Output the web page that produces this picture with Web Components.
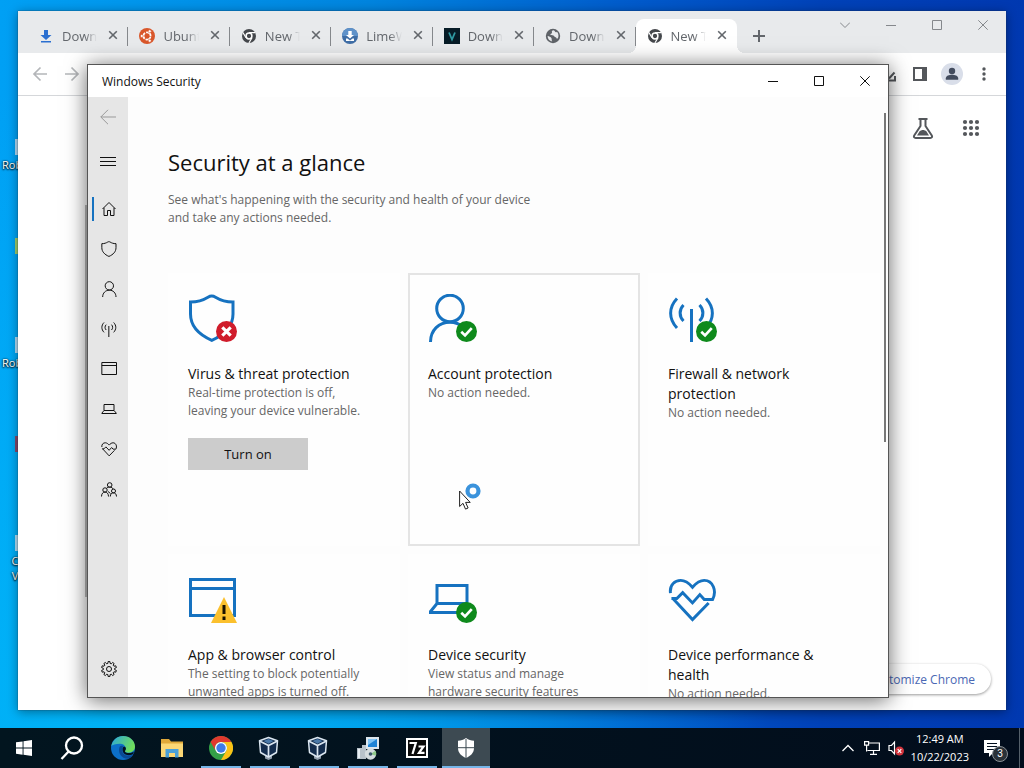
<!DOCTYPE html>
<html lang="en">
<head>
<meta charset="utf-8">
<meta name="viewport" content="width=device-width, initial-scale=1">
<title>Desktop</title>
<style>
  html, body { height: 100%; margin: 0; }
  body { font-family: "Open Sans", "Noto Sans", sans-serif; font-size: 13px; overflow: hidden; }
</style>
</head>
<body>
<desk-top>
  <desktop-shortcut slot="shortcut" color="#dfe9f2">Roblox</desktop-shortcut>
  <desktop-shortcut slot="shortcut" color="#c8d94a"></desktop-shortcut>
  <desktop-shortcut slot="shortcut" color="#dfe9f2">Roblox</desktop-shortcut>
  <desktop-shortcut slot="shortcut" color="#a8324a"></desktop-shortcut>
  <desktop-shortcut slot="shortcut" color="#dfe9f2">C<br>V</desktop-shortcut>

  <browser-window slot="window">
    <browser-tab slot="tab" icon="download">Downloads</browser-tab>
    <browser-tab slot="tab" icon="ubuntu">Ubuntu</browser-tab>
    <browser-tab slot="tab" icon="chromeGray">New Tab</browser-tab>
    <browser-tab slot="tab" icon="lime">LimeWire</browser-tab>
    <browser-tab slot="tab" icon="vegas">Download</browser-tab>
    <browser-tab slot="tab" icon="globe">Download</browser-tab>
    <browser-tab slot="tab" icon="chromeGray" active>New Tab</browser-tab>
  </browser-window>

  <security-window slot="window">
    <status-card slot="card" icon="shield" badge="badgeError" heading="Virus &amp; threat protection" action="Turn on">Real-time protection is off, leaving your device vulnerable.</status-card>
    <status-card slot="card" icon="account" badge="badgeOk" heading="Account protection" hovered>No action needed.</status-card>
    <status-card slot="card" icon="antenna" badge="badgeOk" heading="Firewall &amp; network protection">No action needed.</status-card>
    <status-card slot="card" icon="window" badge="badgeWarn" heading="App &amp; browser control">The setting to block potentially unwanted apps is turned off.</status-card>
    <status-card slot="card" icon="laptop" badge="badgeOk" heading="Device security">View status and manage hardware security features</status-card>
    <status-card slot="card" icon="heart" heading="Device performance &amp; health">No action needed.</status-card>
  </security-window>

  <task-bar slot="taskbar">
    <task-button slot="pinned" icon="start" size="16" label="Start"></task-button>
    <task-button slot="pinned" icon="search" size="24" label="Search"></task-button>
    <task-button slot="app" icon="edge" size="24" label="Microsoft Edge"></task-button>
    <task-button slot="app" icon="folder" size="24" label="File Explorer"></task-button>
    <task-button slot="app" icon="chrome" size="24" label="Google Chrome" running></task-button>
    <task-button slot="app" icon="vbox" size="24" label="VirtualBox" running></task-button>
    <task-button slot="app" icon="vbox" size="24" label="VirtualBox machine" running></task-button>
    <task-button slot="app" icon="installer" size="24" label="Installer" running></task-button>
    <task-button slot="app" icon="seven" size="22" label="7-Zip" running></task-button>
    <task-button slot="app" icon="defender" size="20" label="Windows Security" running active></task-button>
  </task-bar>
</desk-top>

<script>
// Outline of a cog wheel, centred in a 48px box
function gearPath(teeth, outer, inner) {
  const pts = [];
  const step = (Math.PI * 2) / teeth;
  for (let i = 0; i < teeth; i++) {
    const a = i * step - Math.PI / 2;
    [[-0.32, inner], [-0.2, outer], [0.2, outer], [0.32, inner]].forEach(([t, r]) => {
      pts.push((24 + Math.cos(a + t * step) * r).toFixed(1) + ' ' + (24 + Math.sin(a + t * step) * r).toFixed(1));
    });
  }
  return 'M' + pts.join('L') + 'z';
}

const line = (w) => `fill="none" stroke="currentColor" stroke-width="${w}"`;

// name: [viewBox, markup]
const ICONS = {
  // security
  shield: ['0 0 48 48', `<path ${line(3)} d="M2.5 8c8 0 13-2 17.5-4.8 2.5-1.5 5-1.5 7.5 0C32 6 37 8 45 8v12c0 12-8 20.5-21.200 26.300C10.500 40.500 2.500 32 2.500 20z"/>`],
  account: ['0 0 48 48', `<g ${line(3)}><circle cx="22" cy="14.5" r="13.3"/><path d="M2.5 48c0-12 8.5-19.8 19.5-19.8 5.500 0 10 2 14 5"/></g>`],
  person: ['0 0 48 48', `<g ${line(3)}><circle cx="25" cy="14.5" r="12.5"/><path d="M5 48c0-12 8.500-20.500 20-20.500S45 36 45 48"/></g>`],
  antenna: ['0 0 48 48', `<g ${line(3)}><path d="M23.500 15v33M9 4.500c-8.500 9-8.500 20.500 0 29.500M15.500 11c-4.500 4.500-4.500 11.500 0 16M38 4.500c8.500 9 8.500 20.500 0 29.500M31.500 11c4.500 4.500 4.500 11.500 0 16"/></g>`],
  window: ['0 0 48 48', `<g ${line(3)}><path d="M2.500 4.500h44v36h-44zM2.500 13.500h44"/></g>`],
  laptop: ['0 0 48 48', `<g ${line(3)}><path d="M9 10.500h30v18H9zM9 28.500 2.500 36.500v1H46v-1l-7-8"/></g>`],
  heart: ['0 0 49 49', `<g ${line(3)}><path d="M2.500 18.500C1.500 10 7 5.500 13 5.500c5 0 8.500 3 12 7 3.500-4 7-7 12-7 9 0 13 11 8.500 19.500H37l-4.500-5L25 28.500 15 18l-6 6H3.500M5 24l20 21.500L41.500 28.500"/></g>`],
  badgeOk: ['0 0 20 20', `<circle cx="10" cy="10" r="10" fill="#0f8a1c"/><path d="M5 10.300 8.600 13.700 15 6.800" fill="none" stroke="#fff" stroke-width="2.600"/>`],
  badgeError: ['0 0 20 20', `<circle cx="10" cy="10" r="10" fill="#d01c2b"/><path d="M6 6l8 8M14 6l-8 8" stroke="#fff" stroke-width="3"/>`],
  badgeWarn: ['0 0 26 26', `<path d="M13 0 26 26H0z" fill="#fbc02d"/><path d="M13 8v9M13 19.500v3.500" stroke="#1a1200" stroke-width="3"/>`],
  back: ['0 0 16 16', `<path ${line(1)} d="M16 8H.8M8 .8.8 8 8 15.200"/>`],
  menu: ['0 0 16 16', `<path ${line(1)} d="M0 4.500h16M0 8.500h16M0 12.500h16"/>`],
  home: ['0 0 16 16', `<path ${line(1)} d="M1.500 8 8 1.500 14.500 8M3 6.800v7.700h3.500V9.500h3v5H13V6.800"/>`],
  family: ['0 0 16 16', `<g ${line(1)}><circle cx="8.700" cy="4" r="2.300"/><circle cx="4" cy="9" r="2.200"/><circle cx="12.500" cy="10" r="2"/><path d="M.5 15.500c0-6 7-6 7 0M9.300 15.500c0-5 6.200-5 6.200 0M5.500 7.500c.5-1 1.700-1.500 3-1.500 2 0 3.300 1 3.600 2.200M7 10.500l2.500 2"/></g>`],
  gear: ['0 0 48 48', `<g ${line(3)} stroke-linejoin="round"><path d="${gearPath(10, 22.5, 17)}"/><circle cx="24" cy="24" r="7.500"/></g>`],

  // caption buttons
  chevron: ['0 0 10 10', `<path ${line(1)} d="M0 2.500l5 5 5-5"/>`],
  minimize: ['0 0 10 10', `<path ${line(1)} d="M0 5.500h10"/>`],
  maximize: ['0 0 10 10', `<path ${line(1)} d="M.5.5h9v9h-9z"/>`],
  close: ['0 0 10 10', `<path ${line(1)} d="M.3.3l9.400 9.400M9.700.3.3 9.700"/>`],

  // browser
  tabClose: ['0 0 16 16', `<path ${line(1.6)} d="M4.200 5.200l7.600 7.600M11.800 5.200l-7.600 7.600"/>`],
  plus: ['0 0 16 16', `<path ${line(2)} d="M8 2v12M2 8h12"/>`],
  arrowLeft: ['0 0 16 16', `<path ${line(1.7)} d="M15 8H2M8.500 1.500 2 8l6.500 6.500"/>`],
  arrowRight: ['0 0 16 16', `<path ${line(1.7)} d="M1 8h13M7.500 1.500 14 8l-6.500 6.500"/>`],
  share: ['0 0 16 16', `<path ${line(2)} d="M2 6v8.500h13V10M14.500 6.500 9 12.500"/>`],
  panel: ['0 0 16 16', `<path fill="currentColor" fill-rule="evenodd" d="M1 1h14v14H1zM3 3v10h7V3z"/>`],
  avatar: ['0 0 22 22', `<circle cx="11" cy="11" r="11" fill="#d9dee9"/><g fill="#434c5e"><circle cx="11" cy="8" r="3.200"/><path d="M4.800 16.800v-1.500c0-2.500 3.500-3.500 6.200-3.500s6.200 1 6.200 3.500v1.500z"/></g>`],
  dots: ['0 0 16 16', `<g fill="currentColor"><circle cx="8" cy="3" r="1.700"/><circle cx="8" cy="8" r="1.700"/><circle cx="8" cy="13" r="1.700"/></g>`],
  flask: ['0 0 24 24', `<path ${line(2)} stroke-linejoin="round" d="M7.500 3h9M9.500 3v7L3.200 19.500c-.8 1.500 0 2.500 1.500 2.500h14.600c1.500 0 2.300-1 1.500-2.500L14.500 10V3"/><path fill="currentColor" d="M6 19.500l2.500-4c2-2 5-2 7 0l2.500 4z"/>`],
  apps: ['0 0 24 24', `<g fill="currentColor">${[6, 12, 18].map((y) => [6, 12, 18].map((x) => `<circle cx="${x}" cy="${y}" r="2.100"/>`).join('')).join('')}</g>`],
  download: ['0 0 16 16', `<path fill="#2a6fd0" d="M6 2h4v5h3.500L8 12 2.500 7H6zM3 13h10v1.600H3z"/>`],
  ubuntu: ['0 0 16 16', `<circle cx="8" cy="8" r="8" fill="#d9572b"/><circle cx="8" cy="8" r="3.600" fill="none" stroke="#fff" stroke-width="1.700" stroke-dasharray="6.500 1.040" transform="rotate(8 8 8)"/><g fill="#fff" stroke="#d9572b" stroke-width=".6"><circle cx="2.800" cy="8" r="1.500"/><circle cx="10.700" cy="3.300" r="1.500"/><circle cx="10.700" cy="12.700" r="1.500"/></g>`],
  chromeGray: ['0 0 16 16', `<circle cx="8" cy="8" r="7" fill="#45484c"/><circle cx="8" cy="8" r="2.900" fill="#45484c" stroke="#fff" stroke-width="1.500"/><path d="M8 4.600h6.200M5 9.700 1.900 4.500M11 9.700 7.900 15" stroke="#fff" stroke-width="1.200"/>`],
  lime: ['0 0 16 16', `<circle cx="8" cy="8" r="8" fill="#3f6ea6"/><path d="M8 0a8 8 0 0 1 8 8H0a8 8 0 0 1 8-8z" fill="#5f92c9"/><path fill="#fff" d="M6.300 3h3.400v4h2.300L8 10.500 4 7h2.300zM4 10.500h1.500L8 12.500l2.500-2H12v2.500H4z"/>`],
  vegas: ['0 0 16 16', `<path fill="#071c27" d="M0 0h16v16H0z"/><path fill="none" stroke="#2f9aa3" stroke-width="1.800" d="M5 4.500l3 7 3-7"/>`],
  globe: ['0 0 16 16', `<circle cx="8" cy="8" r="7.200" fill="#5f6368"/><path fill="#e8eaec" d="M8.500 2.200c-1.500 0-2 1-1.500 2.300.4 1.200-1.500 1-1.800 2.200 1.500.6 3.300.3 4 1.500.8 1.200 2.500.8 2.300 2.200l1.300.2c1.200-2.500.8-5-.8-6.800-.8.800-1.800.6-2-.2-.2-.7-.8-1.200-1.500-1.400zM2.600 8c1.600.3 3 .8 3.800 2 .5.800 0 2 .8 3.400C4.500 13 2.600 11 2.600 8z"/>`],

  // task bar
  start: ['0 0 16 16', `<path fill="#fff" d="M0 2.300 6.600 1.400v6.200H0zM7.500 1.300 16 0v7.600H7.500zM0 8.500h6.600v6.200L0 13.800zM7.500 8.500H16V16l-8.500-1.200z"/>`],
  search: ['0 0 24 24', `<g fill="none" stroke="#fff" stroke-width="2.300"><circle cx="14" cy="9.500" r="8"/><path d="M8.600 15.500 1.500 23"/></g>`],
  edge: ['0 0 24 24', `<defs><linearGradient id="e1" x1="0" y1="0" x2="1" y2=".4"><stop offset="0" stop-color="#2aa6dd"/><stop offset="1" stop-color="#6fdc5c"/></linearGradient></defs><circle cx="12" cy="12" r="12" fill="#0c6fc8"/><path fill="url(#e1)" d="M.3 10C1.500 4 6.300 0 12 0c7 0 12 5 12 10.500 0 4-3 6.200-6.500 6.200-2.500 0-4-1-3.500-2 2-2.500 0-6.700-4.500-7C5 7.500 1.500 9 .3 10z"/><path fill="#0a4a94" d="M8.500 11c-2 6 2 12 9 11.700 2-.8 3.500-2 4.800-4-7 3-12.500-1-11-6.700.2-1 .6-1.500 1-2-1.500-.5-3.200 0-3.800 1z"/><path fill="#03121f" d="M11.600 12.500c.2-1.500 1.600-2.200 2.800-1.200 1 1.200.4 2.600-.4 3.600-.5 1.200 1.500 2.400 4.500 2.200 2-.2 3.500-.8 4.300-1.600l-.6 2.400c-5 3-11.500.5-10.600-5.400z"/>`],
  folder: ['0 0 24 24', `<path fill="#e0a93a" d="M1 3h8l2 2.500h12V20H1z"/><path fill="#fbd775" d="M1 7.500h22V21H1z"/><path fill="#4aa0d8" d="M5.500 13h13v8.500h-3.500V17H9v4.500H5.500z"/>`],
  chrome: ['0 0 24 24', `<circle cx="12" cy="12" r="12" fill="#34a047"/><path fill="#e0392e" d="M1.600 6A12 12 0 0 1 22.400 6H12a6 6 0 0 0-5.200 9z"/><path fill="#fbc116" d="M22.400 6A12 12 0 0 1 12 24l5.200-9A6 6 0 0 0 12 6z"/><circle cx="12" cy="12" r="6" fill="#fff"/><circle cx="12" cy="12" r="4.700" fill="#3f7be8"/>`],
  vbox: ['0 0 24 24', `<path fill="#8f9cab" d="M7 18h7v4.500L10.500 24 7 22.500z"/><path fill="#132c4c" stroke="#dbe6f0" stroke-width="1.500" stroke-linejoin="round" d="M10.500 1.500l9 3.300-1 11.700-8 4.500-8-4.500-1-11.700z"/><path fill="none" stroke="#dbe6f0" stroke-width="1.700" d="M1.500 5 10.500 9.500l9-4.500M10.500 9.500V21"/><path fill="#4a78a8" d="M10.500 3l5 2-5 2.700-5-2.700z"/>`],
  installer: ['0 0 24 24', `<path fill="#b8c2ca" d="M1 12h5v11H1zM6 9h4v14H6z"/><path fill="#e8eef2" d="M2 13h2v9H2z"/><path fill="#dce6ee" d="M10 1h13v12H10z"/><path fill="#1f83d6" d="M12 3h9v8h-9z"/><path fill="#7fc3f5" d="M12 3h9l-9 6z"/><circle cx="14.500" cy="18" r="5.700" fill="#d5dcdf"/><path fill="#8fc98a" d="M14.500 18l5-3.300a6 6 0 0 1 .5 5z"/><circle cx="14.500" cy="18" r="1.800" fill="#3c566a"/>`],
  seven: ['0 0 22 22', `<path fill="#fff" d="M0 1h22v20H0z"/><path fill="#0a0a0a" d="M2 3h18v16H2z"/><path fill="none" stroke="#fff" stroke-width="2.200" d="M3.500 6h6.300L6.500 17M12.500 9.500h5l-4.500 6.300h5.500"/>`],
  defender: ['0 0 20 20', `<path fill="#fff" d="M10 0c2.500 2 5 2.600 8 2.700V10c0 5-3.500 8-8 10-4.500-2-8-5-8-10V2.700C5 2.600 7.500 2 10 0z"/><path d="M10 1v19M2 9.700h16" stroke="#3d4a52" stroke-width="1"/>`],
  trayUp: ['0 0 16 16', `<path fill="none" stroke="#fff" stroke-width="1.300" d="M2.500 11 8 5.500l5.500 5.500"/>`],
  network: ['0 0 16 16', `<path fill="none" stroke="#fff" stroke-width="1.200" d="M4.500 3H15.400v7.500H3.500M.6 1.600h4v3.500h-4zM2.600 5.100v6.400M9.500 10.500V14M6 14.300h7"/>`],
  sound: ['0 0 16 16', `<path fill="none" stroke="#fff" stroke-width="1.200" d="M6.500 2v12L3.500 10.500H1v-5h2.500z"/><circle cx="11.500" cy="11" r="4.500" fill="#d1343c"/><path d="M9.700 9.200l3.600 3.600M13.300 9.200 9.700 12.800" stroke="#fff" stroke-width="1.200"/>`],
  notes: ['0 0 18 18', `<path fill="#fff" d="M1 1h16v13h-7l-4 4v-4H1z"/><path d="M4 4.500h10M4 7.500h10M4 10.500h7" stroke="#03101f" stroke-width="1.200"/>`],

  // pointer
  arrow: ['0 0 12 20', `<path fill="#fff" stroke="#222" stroke-linejoin="round" d="M.6 1v15.500L4 13.300l2.500 5.800 2.600-1.100-2.500-5.600h4.600z"/>`],
  busy: ['0 0 16 16', `<circle cx="8" cy="8" r="5.500" fill="#fff" stroke="#3b93dc" stroke-width="4.200"/>`]
};

class UiIcon extends HTMLElement {
  constructor() {
    super();
    this.attachShadow({ mode: 'open' });
  }

  connectedCallback() {
    const [box, markup] = ICONS[this.getAttribute('name')];
    const size = this.getAttribute('size') || 16;
    this.shadowRoot.innerHTML = `
      <style>
        :host { display: inline-flex; flex: none; }
        svg { display: block; height: ${size}px; }
      </style>
      <svg viewBox="${box}" aria-hidden="true">${markup}</svg>
    `;
  }
}
customElements.define('ui-icon', UiIcon);

// Minimize / maximize / close strip of a window
class CaptionButtons extends HTMLElement {
  constructor() {
    super();
    this.attachShadow({ mode: 'open' });
  }

  connectedCallback() {
    const names = ['minimize', 'maximize', 'close'];
    if (this.hasAttribute('chevron')) names.unshift('chevron');
    this.shadowRoot.innerHTML = `
      <style>
        :host { display: flex; }
        button {
          display: flex; align-items: center; justify-content: center;
          width: 46px; height: 28px; padding: 0; border: 0;
          background: none; color: inherit;
        }
        button:hover { background: rgba(0, 0, 0, .1); }
      </style>
      ${names.map((n) => `<button aria-label="${n}"><ui-icon name="${n}" size="10"></ui-icon></button>`).join('')}
    `;
  }
}
customElements.define('caption-buttons', CaptionButtons);

class DesktopShortcut extends HTMLElement {
  constructor() {
    super();
    this.attachShadow({ mode: 'open' });
  }

  connectedCallback() {
    this.shadowRoot.innerHTML = `
      <style>
        :host {
          display: flex; flex-direction: column; height: 99px;
          color: #fff; font-size: 11px; line-height: 15px;
          text-shadow: 0 1px 2px #000, 0 0 2px #000;
        }
        i { width: 32px; height: 16px; margin: 0 0 2px 15px; background: ${this.getAttribute('color')}; opacity: .8; }
        span { width: 26px; margin-left: 2px; text-align: center; white-space: nowrap; }
      </style>
      <i></i><span><slot></slot></span>
    `;
  }
}
customElements.define('desktop-shortcut', DesktopShortcut);

class BrowserTab extends HTMLElement {
  constructor() {
    super();
    this.attachShadow({ mode: 'open' });
  }

  connectedCallback() {
    this.shadowRoot.innerHTML = `
      <style>
        :host {
          position: relative; display: flex; flex: 1; align-items: center; gap: 8px;
          min-width: 0; height: 34px; padding: 0 7px 0 11px; box-sizing: border-box;
          background: linear-gradient(#85888c, #85888c) right center / 1px 19px no-repeat;
          color: #63676c;
        }
        :host([active]) { background: #fff; border-radius: 8px 8px 0 0; }
        :host([active])::before, :host([active])::after {
          content: ""; position: absolute; bottom: 0; width: 8px; height: 8px;
        }
        :host([active])::before { left: -8px; background: radial-gradient(circle at 0 0, transparent 8px, #fff 8px); }
        :host([active])::after { right: -8px; background: radial-gradient(circle at 100% 0, transparent 8px, #fff 8px); }
        button { padding: 0; border: 0; background: none; color: inherit; font: inherit; }
        .tab { display: flex; flex: 1; align-items: center; gap: 8px; min-width: 0; font-size: 13px; }
        .tab span {
          flex: 1; overflow: hidden; white-space: nowrap; text-align: left;
          -webkit-mask-image: linear-gradient(to right, #000 65%, transparent 100%);
          mask-image: linear-gradient(to right, #000 65%, transparent 100%);
        }
      </style>
      <button class="tab" role="tab"><ui-icon name="${this.getAttribute('icon')}"></ui-icon><span><slot></slot></span></button>
      <button aria-label="Close tab"><ui-icon name="tabClose"></ui-icon></button>
    `;
  }
}
customElements.define('browser-tab', BrowserTab);

class BrowserWindow extends HTMLElement {
  constructor() {
    super();
    this.attachShadow({ mode: 'open' });
  }

  connectedCallback() {
    this.shadowRoot.innerHTML = `
      <style>
        :host {
          position: absolute; inset: 11px 18px 18px 18px;
          display: flex; flex-direction: column; background: #fff;
          box-shadow: 0 0 1px #234, 0 2px 10px rgba(0, 0, 0, .4);
        }
        .strip { display: flex; align-items: flex-end; height: 42px; padding-left: 9px; background: #e8eaec; color: #63676c; }
        .tabs { display: flex; flex: 0 1 710px; min-width: 0; }
        .new { margin-left: 8px; }
        caption-buttons { align-self: flex-start; margin-left: auto; color: #85888c; }
        button {
          display: flex; align-items: center; justify-content: center;
          width: 32px; height: 34px; padding: 0; border: 0;
          background: none; color: inherit; font: inherit;
        }
        .new { width: 28px; }
        .toolbar { display: flex; align-items: center; height: 42px; padding: 0 6px; border-bottom: 1px solid #d5d7da; color: #54575b; }
        .nav { display: flex; margin-right: auto; color: #b4b6b9; }
        .page { display: flex; flex: 1; flex-direction: column; align-items: flex-end; justify-content: space-between; padding: 12px 15px 16px; color: #54575b; }
        .links { display: flex; gap: 8px; }
        .links button { width: 40px; height: 40px; }
        .customize {
          width: auto; height: 30px; padding: 0 16px; border-radius: 15px;
          background: #fff; color: #4a68b4; font-size: 12px;
          box-shadow: 0 1px 3px rgba(0, 0, 0, .4);
        }
      </style>
      <div class="strip">
        <div class="tabs" role="tablist"><slot name="tab"></slot></div>
        <button class="new" aria-label="New tab"><ui-icon name="plus"></ui-icon></button>
        <caption-buttons chevron></caption-buttons>
      </div>
      <div class="toolbar">
        <div class="nav">
          <button aria-label="Back"><ui-icon name="arrowLeft"></ui-icon></button>
          <button aria-label="Forward"><ui-icon name="arrowRight"></ui-icon></button>
        </div>
        <button aria-label="Share"><ui-icon name="share"></ui-icon></button>
        <button aria-label="Side panel"><ui-icon name="panel"></ui-icon></button>
        <button aria-label="Profile"><ui-icon name="avatar" size="22"></ui-icon></button>
        <button aria-label="Menu"><ui-icon name="dots"></ui-icon></button>
      </div>
      <div class="page">
        <div class="links">
          <button aria-label="Search labs"><ui-icon name="flask" size="24"></ui-icon></button>
          <button aria-label="Google apps"><ui-icon name="apps" size="24"></ui-icon></button>
        </div>
        <button class="customize">Customize Chrome</button>
      </div>
    `;
  }
}
customElements.define('browser-window', BrowserWindow);

class StatusCard extends HTMLElement {
  constructor() {
    super();
    this.attachShadow({ mode: 'open' });
  }

  connectedCallback() {
    const badge = this.getAttribute('badge');
    const action = this.getAttribute('action');
    this.shadowRoot.innerHTML = `
      <style>
        :host { display: block; padding: 19px 26px 19px 18px; border: 2px solid transparent; background: #fefefe; }
        :host([hovered]) { border-color: #e4e4e4; }
        .icon { position: relative; width: 50px; height: 48px; margin-bottom: 22px; color: #1672c0; }
        .badge { position: absolute; right: 1px; bottom: 0; }
        h2 { margin: 0; color: #111; font-size: 14px; font-weight: 400; line-height: 20px; }
        a { color: inherit; text-decoration: none; }
        p { margin: 0; color: #666; font-size: 12px; line-height: 18px; }
        button { width: 120px; height: 32px; margin-top: 18px; padding: 0; border: 0; background: #ccc; color: #111; font: inherit; }
      </style>
      <div class="icon">
        <ui-icon name="${this.getAttribute('icon')}" size="48"></ui-icon>
        ${badge ? `<ui-icon class="badge" name="${badge}" size="${badge === 'badgeWarn' ? 26 : 21}"></ui-icon>` : ''}
      </div>
      <h2><a href="#"></a></h2>
      <p><slot></slot></p>
      ${action ? `<button>${action}</button>` : ''}
    `;
    this.shadowRoot.querySelector('a').textContent = this.getAttribute('heading');
  }
}
customElements.define('status-card', StatusCard);

class SecurityWindow extends HTMLElement {
  constructor() {
    super();
    this.attachShadow({ mode: 'open' });
  }

  connectedCallback() {
    const pages = ['home', 'shield', 'person', 'antenna', 'window', 'laptop', 'heart', 'family'];
    this.shadowRoot.innerHTML = `
      <style>
        :host {
          position: absolute; inset: 64px 135px 30px 87px;
          display: flex; flex-direction: column; border: 1px solid #555; background: #fdfdfd;
          box-shadow: 0 2px 20px rgba(0, 0, 0, .6);
        }
        :host::before {
          content: ""; position: absolute; left: -3px; top: 140px; bottom: 100px; width: 2px; background: #888;
        }
        header { display: flex; align-items: center; height: 32px; padding-left: 14px; background: #fff; color: #111; font-size: 12px; }
        caption-buttons { margin-left: auto; }
        .body { display: flex; flex: 1; min-height: 0; }
        nav { display: flex; flex-direction: column; width: 40px; padding-bottom: 8px; box-sizing: border-box; background: #e6e6e6; color: #111; }
        nav button {
          display: flex; align-items: center; justify-content: center; box-sizing: border-box;
          width: 40px; height: 40px; padding: 0 0 0 2px; border: 0; background: none; color: inherit;
        }
        nav .back, nav .menu { padding: 0; }
        nav .back { color: #999; }
        nav .menu { margin: 4px 0 8px; }
        nav .current { background: linear-gradient(#1672c0, #1672c0) 4px center / 2px 24px no-repeat; }
        nav .settings { margin-top: auto; }
        main { flex: 1; padding: 49px 0 0 40px; overflow: hidden; }
        h1 { margin: 0; color: #111; font-size: 22px; font-weight: 400; line-height: 32px; }
        .intro { max-width: 380px; margin: 13px 0 46px; color: #666; font-size: 12px; line-height: 18px; }
        .cards { display: grid; grid-template-columns: repeat(auto-fill, 232px); grid-auto-rows: minmax(273px, auto); gap: 8px; }
        ::slotted(status-card) { box-sizing: border-box; }
        .thumb { position: absolute; right: 2px; top: 48px; width: 2px; height: 52%; background: #777; }
      </style>
      <header>Windows Security<caption-buttons></caption-buttons></header>
      <div class="body">
        <nav>
          <button class="back" aria-label="Back"><ui-icon name="back"></ui-icon></button>
          <button class="menu" aria-label="Open navigation"><ui-icon name="menu"></ui-icon></button>
          ${pages.map((p, i) => `<button class="${i === 0 ? 'current' : ''}" aria-label="${p}"><ui-icon name="${p}"></ui-icon></button>`).join('')}
          <button class="settings" aria-label="Settings"><ui-icon name="gear"></ui-icon></button>
        </nav>
        <main>
          <h1>Security at a glance</h1>
          <p class="intro">See what's happening with the security and health of your device and take any actions needed.</p>
          <div class="cards"><slot name="card"></slot></div>
        </main>
      </div>
      <div class="thumb"></div>
    `;
  }
}
customElements.define('security-window', SecurityWindow);

class TaskButton extends HTMLElement {
  constructor() {
    super();
    this.attachShadow({ mode: 'open' });
  }

  connectedCallback() {
    this.shadowRoot.innerHTML = `
      <style>
        :host { display: block; }
        button {
          display: flex; align-items: center; justify-content: center;
          width: 48px; height: 40px; padding: 0; border: 0; background: none;
        }
        :host([running]) button { background: linear-gradient(#76b5e8, #76b5e8) center bottom / 40px 2px no-repeat; }
        :host([active]) button { background: linear-gradient(#76b5e8, #76b5e8) center bottom / 48px 2px no-repeat, #3d4a52; }
      </style>
      <button aria-label="${this.getAttribute('label')}"><ui-icon name="${this.getAttribute('icon')}" size="${this.getAttribute('size')}"></ui-icon></button>
    `;
  }
}
customElements.define('task-button', TaskButton);

class TaskBar extends HTMLElement {
  constructor() {
    super();
    this.attachShadow({ mode: 'open' });
  }

  connectedCallback() {
    this.shadowRoot.innerHTML = `
      <style>
        :host { display: flex; height: 40px; background: linear-gradient(to right, #02151f, #020d1c); color: #fff; }
        .pinned, .apps, .tray { display: flex; align-items: center; }
        .apps { gap: 1px; margin-left: 3px; }
        .tray { margin-left: auto; }
        button { display: flex; align-items: center; justify-content: center; width: 24px; height: 40px; padding: 0; border: 0; background: none; color: inherit; }
        .clock { display: flex; flex-direction: column; align-items: center; margin: 0 6px 0 3px; font-size: 11px; line-height: 18px; }
        .action { position: relative; width: 34px; margin-right: 10px; }
        .count {
          position: absolute; left: 17px; top: 18px; width: 14px; height: 14px;
          border: 1px solid #8a9096; border-radius: 50%; background: #2a3138;
          font-size: 10px; line-height: 14px; text-align: center;
        }
        .peek { width: 4px; height: 40px; border-left: 1px solid #55606a; }
      </style>
      <div class="pinned"><slot name="pinned"></slot></div>
      <div class="apps"><slot name="app"></slot></div>
      <div class="tray">
        <button aria-label="Show hidden icons"><ui-icon name="trayUp"></ui-icon></button>
        <button aria-label="Network"><ui-icon name="network"></ui-icon></button>
        <button aria-label="Volume muted"><ui-icon name="sound"></ui-icon></button>
        <div class="clock"><time>12:49 AM</time><time>10/22/2023</time></div>
        <button class="action" aria-label="Notifications"><ui-icon name="notes" size="18"></ui-icon><span class="count">3</span></button>
        <div class="peek"></div>
      </div>
    `;
  }
}
customElements.define('task-bar', TaskBar);

class DeskTop extends HTMLElement {
  constructor() {
    super();
    this.attachShadow({ mode: 'open' });
  }

  connectedCallback() {
    this.shadowRoot.innerHTML = `
      <style>
        :host { display: flex; flex-direction: column; height: 100vh; }
        .area {
          position: relative; flex: 1; min-height: 0; overflow: hidden;
          background:
            linear-gradient(to bottom, rgba(0, 186, 250, 0) 30%, rgba(0, 186, 250, .8)) left / 50% 100% no-repeat,
            linear-gradient(to right, #00a0f0 0, #0082de 36%, #0058cb 62%, #0042b8 80%, #0038b0 100%);
          background:
            radial-gradient(ellipse 60% 90% at 15% 100%, rgba(0, 184, 248, .9), rgba(0, 184, 248, 0)),
            linear-gradient(to right, #00a0f4 0, #0084de 36%, #005acb 62%, #0042b8 80%, #0038b0 100%);
        }
        .shortcuts { display: flex; flex-direction: column; padding-top: 139px; }
        .pointer { position: absolute; left: 459px; top: 490px; }
        .pointer .busy { position: absolute; left: 6px; top: -7px; }
      </style>
      <div class="area">
        <div class="shortcuts"><slot name="shortcut"></slot></div>
        <slot name="window"></slot>
        <div class="pointer"><ui-icon name="arrow" size="20"></ui-icon><ui-icon class="busy" name="busy"></ui-icon></div>
      </div>
      <slot name="taskbar"></slot>
    `;
  }
}
customElements.define('desk-top', DeskTop);
</script>
</body>
</html>
